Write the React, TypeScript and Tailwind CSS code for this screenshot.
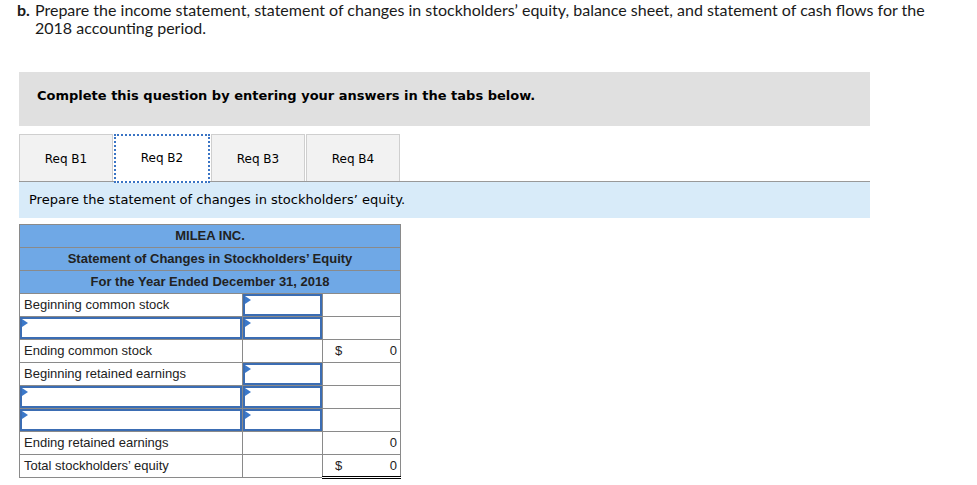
import React from "react";

type Row = {
  label?: string;
  labelInput?: boolean;
  amountInput?: boolean;
  dollar?: boolean;
  total?: string;
  underline?: "single" | "double";
};

const ROWS: Row[] = [
  { label: "Beginning common stock", amountInput: true },
  { labelInput: true, amountInput: true },
  { label: "Ending common stock", dollar: true, total: "0" },
  { label: "Beginning retained earnings", amountInput: true },
  { labelInput: true, amountInput: true },
  { labelInput: true, amountInput: true },
  { label: "Ending retained earnings", total: "0", underline: "single" },
  { label: "Total stockholders\u2019 equity", dollar: true, total: "0", underline: "double" },
];

const TABS = ["Req B1", "Req B2", "Req B3", "Req B4"];

function InputBox() {
  return (
    <div className="relative h-[22px] w-full border-2 border-[#3b6db3]">
      {/* little dropdown marker in the corner */}
      <span className="absolute left-0 top-0 h-0 w-0 border-y-[4px] border-l-[6px] border-y-transparent border-l-[#3b78c9]" />
    </div>
  );
}

export default function App() {
  return (
    <div className="min-h-[485px] w-[977px] bg-white pt-[1px] text-[#222]">
      {/* Question text */}
      <div className="ml-[17px] flex w-[920px] font-['Lato',sans-serif] text-[16px] leading-[18px] text-[#1a1a1a]">
        <span className="w-[18px] shrink-0 font-bold">b.</span>
        <p>
          Prepare the income statement, statement of changes in stockholders’ equity, balance sheet, and statement of cash flows for the
          2018 accounting period.
        </p>
      </div>

      {/* Instructions box */}
      <div className="ml-[19px] mt-[35px] flex h-[54px] w-[851px] items-center bg-[#e0e0e0] pb-[6px] pl-[18px] font-['DejaVu_Sans',Verdana,sans-serif] text-[13px] font-bold text-black">
        Complete this question by entering your answers in the tabs below.
      </div>

      {/* Tabs */}
      <div className="ml-[19px] mt-[8px] flex h-[47px] items-end gap-[1px] font-['DejaVu_Sans',Verdana,sans-serif] text-[12px] text-black">
        {TABS.map((tab, i) =>
          i === 1 ? (
            <div
              key={tab}
              className="relative z-10 -mb-[2px] flex h-[49px] w-[96px] items-center justify-center border-2 border-dotted border-[#3a74c4] bg-white pb-[1px]"
            >
              {tab}
            </div>
          ) : (
            <div
              key={tab}
              className="flex h-[47px] w-[94px] items-center justify-center border border-b-0 border-[#cfcfcf] bg-[#f2f2f2] pt-[2px]"
            >
              {tab}
            </div>
          )
        )}
      </div>

      <div className="ml-[19px] flex h-[37px] w-[851px] items-center border-t border-[#999] bg-[#d8ebf9] pl-[10px] font-['DejaVu_Sans',Verdana,sans-serif] text-[13px] text-black">
        Prepare the statement of changes in stockholders’ equity.
      </div>

      {/* Statement table */}
      <table className="ml-[19px] mt-[6px] w-[381px] table-fixed border-collapse font-['Liberation_Sans',Arial,sans-serif] text-[13px]">
        <colgroup>
          <col className="w-[223px]" />
          <col className="w-[80px]" />
          <col className="w-[78px]" />
        </colgroup>
        <thead className="bg-[#6fa8e6] font-bold text-[#222]">
          <tr className="h-[23px]">
            <th colSpan={3} className="border border-[#8a8a8a] p-0 text-center">MILEA INC.</th>
          </tr>
          <tr className="h-[23px]">
            <th colSpan={3} className="border border-[#8a8a8a] p-0 text-center">Statement of Changes in Stockholders’ Equity</th>
          </tr>
          <tr className="h-[23px]">
            <th colSpan={3} className="border border-[#8a8a8a] p-0 text-center">For the Year Ended December 31, 2018</th>
          </tr>
        </thead>
        <tbody>
          {ROWS.map((row, i) => (
            <tr key={i}>
              <td className="h-[23px] border border-[#8a8a8a] p-0 align-middle">
                {row.labelInput ? <InputBox /> : <span className="pl-[4px]">{row.label}</span>}
              </td>
              <td className="h-[23px] border border-[#8a8a8a] p-0">
                {row.amountInput && <InputBox />}
              </td>
              <td
                className={`h-[23px] border-x border-t border-[#8a8a8a] p-0 ${
                  row.underline === "double"
                    ? "border-b-[3px] border-double border-b-black"
                    : row.underline === "single"
                    ? "border-b border-b-black"
                    : "border-b"
                }`}
              >
                <div className="flex items-center justify-between pl-[12px] pr-[3px]">
                  <span>{row.dollar ? "$" : ""}</span>
                  <span>{row.total ?? ""}</span>
                </div>
              </td>
            </tr>
          ))}
        </tbody>
      </table>
    </div>
  );
}
